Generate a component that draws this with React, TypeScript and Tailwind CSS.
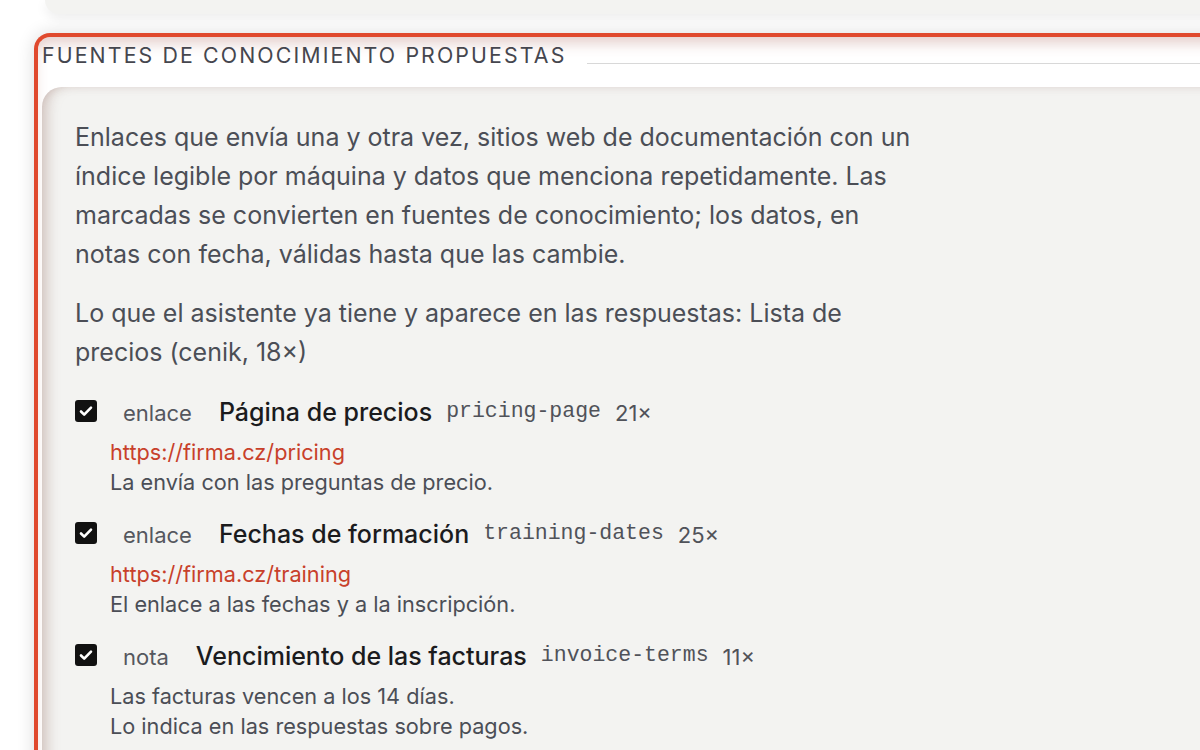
import React from "react";

type Item = {
  kind: string;
  title: string;
  slug: string;
  count: string;
  url?: string;
  lines: string[];
};

const items: Item[] = [
  {
    kind: "enlace",
    title: "Página de precios",
    slug: "pricing-page",
    count: "21×",
    url: "https://firma.cz/pricing",
    lines: ["La envía con las preguntas de precio."],
  },
  {
    kind: "enlace",
    title: "Fechas de formación",
    slug: "training-dates",
    count: "25×",
    url: "https://firma.cz/training",
    lines: ["El enlace a las fechas y a la inscripción."],
  },
  {
    kind: "nota",
    title: "Vencimiento de las facturas",
    slug: "invoice-terms",
    count: "11×",
    lines: ["Las facturas vencen a los 14 días.", "Lo indica en las respuestas sobre pagos."],
  },
];

const CheckBox = () => (
  <span className="flex h-[22px] w-[22px] shrink-0 -translate-y-[2px] items-center justify-center rounded-[3px] bg-[#111111]">
    <svg width="16" height="16" viewBox="0 0 16 16" fill="none">
      <path d="M3 8.5l3.2 3.2L13 4.6" stroke="#ffffff" strokeWidth="2.6" strokeLinecap="round" strokeLinejoin="round" />
    </svg>
  </span>
);

const SourceRow = ({ item }: { item: Item }) => (
  <div className="flex flex-col">
    <div className="flex h-[32px] items-center">
      <CheckBox />
      <span className="ml-[26px] text-[22px] text-[#55575e]">{item.kind}</span>
      <span className="ml-[27px] text-[25px] font-medium text-[#1b1b1d]">{item.title}</span>
      <span className="ml-[14px] -translate-y-[2px] font-['Liberation_Mono',monospace] text-[21.5px] text-[#505259]">
        {item.slug}
      </span>
      <span className="ml-[14px] text-[22px] text-[#505259]">{item.count}</span>
    </div>
    <div className="mt-[8px] pl-[35px] text-[21.7px] leading-[30px]">
      {item.url && <div className="text-[#c8402a]">{item.url}</div>}
      {item.lines.map((l) => (
        <div key={l} className="text-[#4b4e56]">
          {l}
        </div>
      ))}
    </div>
  </div>
);

export default function App() {
  return (
    <div className="h-[750px] w-[1200px] overflow-hidden bg-white font-['Inter','Noto_Sans',sans-serif]">
      <div className="ml-[45px] h-[14px] w-[1250px] rounded-bl-[22px] bg-[#f3f3f1] shadow-[0_4px_12px_rgba(0,0,0,0.08)]" />

      <div className="ml-[34px] mt-[19px] w-[1250px] rounded-tl-[16px] border-l-4 border-t-4 border-[#e0492d] bg-white shadow-[0_0_18px_rgba(0,0,0,0.14),inset_0_10px_14px_-4px_rgba(170,100,90,0.32)]">
        <div className="flex h-[50px] items-end pb-[21px] pl-[4px]">
          <span className="text-[21.3px] leading-[21px] uppercase tracking-[0.1em] text-[#45464e]">
            Fuentes de conocimiento propuestas
          </span>
          <span className="mb-[2px] ml-[20px] h-px flex-1 bg-[#d8d8d8]" />
        </div>

        <div className="ml-[4px] h-[700px] rounded-tl-[20px] bg-[#f3f3f1] pl-[33px] pt-[31px] shadow-[inset_12px_0_14px_-8px_rgba(150,110,100,0.4),inset_0_8px_10px_-8px_rgba(150,110,100,0.15)]">
          <p className="max-w-[845px] text-[25px] leading-[39px] text-[#4b4e56]">
            Enlaces que envía una y otra vez, sitios web de documentación con un índice legible por máquina y datos que
            menciona repetidamente. Las marcadas se convierten en fuentes de conocimiento; los datos, en notas con fecha,
            válidas hasta que las cambie.
          </p>
          <p className="mt-[20px] max-w-[845px] text-[25px] leading-[39px] text-[#4b4e56]">
            Lo que el asistente ya tiene y aparece en las respuestas: Lista de precios (cenik, 18×)
          </p>

          <div className="mt-[25px] flex flex-col gap-[22px]">
            {items.map((it) => (
              <SourceRow key={it.slug} item={it} />
            ))}
          </div>
        </div>
      </div>
    </div>
  );
}
